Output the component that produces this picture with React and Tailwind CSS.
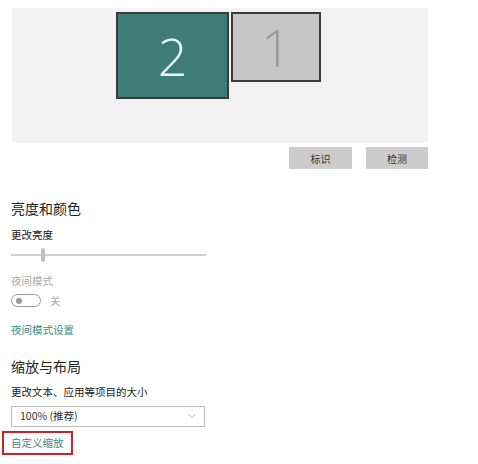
import { ChevronDown } from "lucide-react";

const font = { fontFamily: '"Noto Sans CJK SC", "Noto Sans", sans-serif' };

function Monitor({ n, active, className }) {
  return (
    <div
      className={
        "flex items-center justify-center border-2 border-[#3a3a3a] " +
        (active ? "bg-[#3f7c78] text-[#e6f6f4]" : "bg-[#c6c6c6] text-[#9a9a9a]") +
        " " +
        className
      }
    >
      <span className="text-[52px] font-light leading-none" style={{ fontFamily: '"Open Sans", sans-serif' }}>
        {n}
      </span>
    </div>
  );
}

export default function App() {
  return (
    <div className="w-[478px] h-[464px] bg-white overflow-hidden text-[#1a1a1a]" style={font}>
      <div className="pt-[8px] pl-[12px]">
        <div className="w-[416px] h-[135px] bg-[#f2f2f2] flex items-start pl-[104px] pt-[4px] gap-[2px]">
          <Monitor n="2" active className="w-[113px] h-[87px]" />
          <Monitor n="1" className="w-[90px] h-[70px]" />
        </div>
        <div className="w-[416px] flex justify-end gap-[14px] mt-[4px]">
          <button className="w-[63px] h-[22px] bg-[#cccccc] text-[10px] text-[#333]">标识</button>
          <button className="w-[62px] h-[22px] bg-[#cccccc] text-[10px] text-[#333]">检测</button>
        </div>
      </div>

      <div className="pl-[11px]">
        <h2 className="mt-[29px] text-[14px] leading-[20px] text-[#222]">亮度和颜色</h2>
        <p className="mt-[10px] text-[10.5px] leading-[14px] text-[#222]">更改亮度</p>
        <div className="relative w-[195px] h-[14px] mt-[6px]">
          <div className="absolute left-0 right-0 top-[6px] h-[2px] bg-[#d0d0d0]" />
          <div className="absolute left-[30px] top-0 w-[4px] h-[14px] rounded-full bg-[#c0c0c0]" />
        </div>
        <p className="mt-[12px] text-[10.5px] leading-[14px] text-[#a8a8a8]">夜间模式</p>
        <div className="flex items-center gap-[9px] mt-[5px]">
          <div className="w-[30px] h-[13px] rounded-full border border-[#9a9a9a] flex items-center pl-[4px]">
            <div className="w-[6px] h-[6px] rounded-full bg-[#9a9a9a]" />
          </div>
          <span className="text-[10.5px] text-[#a8a8a8]">关</span>
        </div>
        <p className="mt-[14px] text-[10.5px] leading-[14px] text-[#3a8a83]">夜间模式设置</p>

        <h2 className="mt-[19px] text-[14px] leading-[20px] text-[#222]">缩放与布局</h2>
        <p className="mt-[9px] text-[10.5px] leading-[14px] text-[#222]">更改文本、应用等项目的大小</p>
        <div className="mt-[7px] w-[194px] h-[21px] border border-[#bdbdbd] flex items-center justify-between pl-[8px] pr-[6px]">
          <span className="text-[10.5px] text-[#333]">100% (推荐)</span>
          <ChevronDown size={12} strokeWidth={1.5} className="text-[#999]" />
        </div>
      </div>
      <div className="ml-[2px] mt-[4px] w-[71px] h-[24px] border-2 border-[#d0202a] flex items-center pl-[7px]">
        <span className="text-[10.5px] text-[#3a8a83]">自定义缩放</span>
      </div>
    </div>
  );
}
